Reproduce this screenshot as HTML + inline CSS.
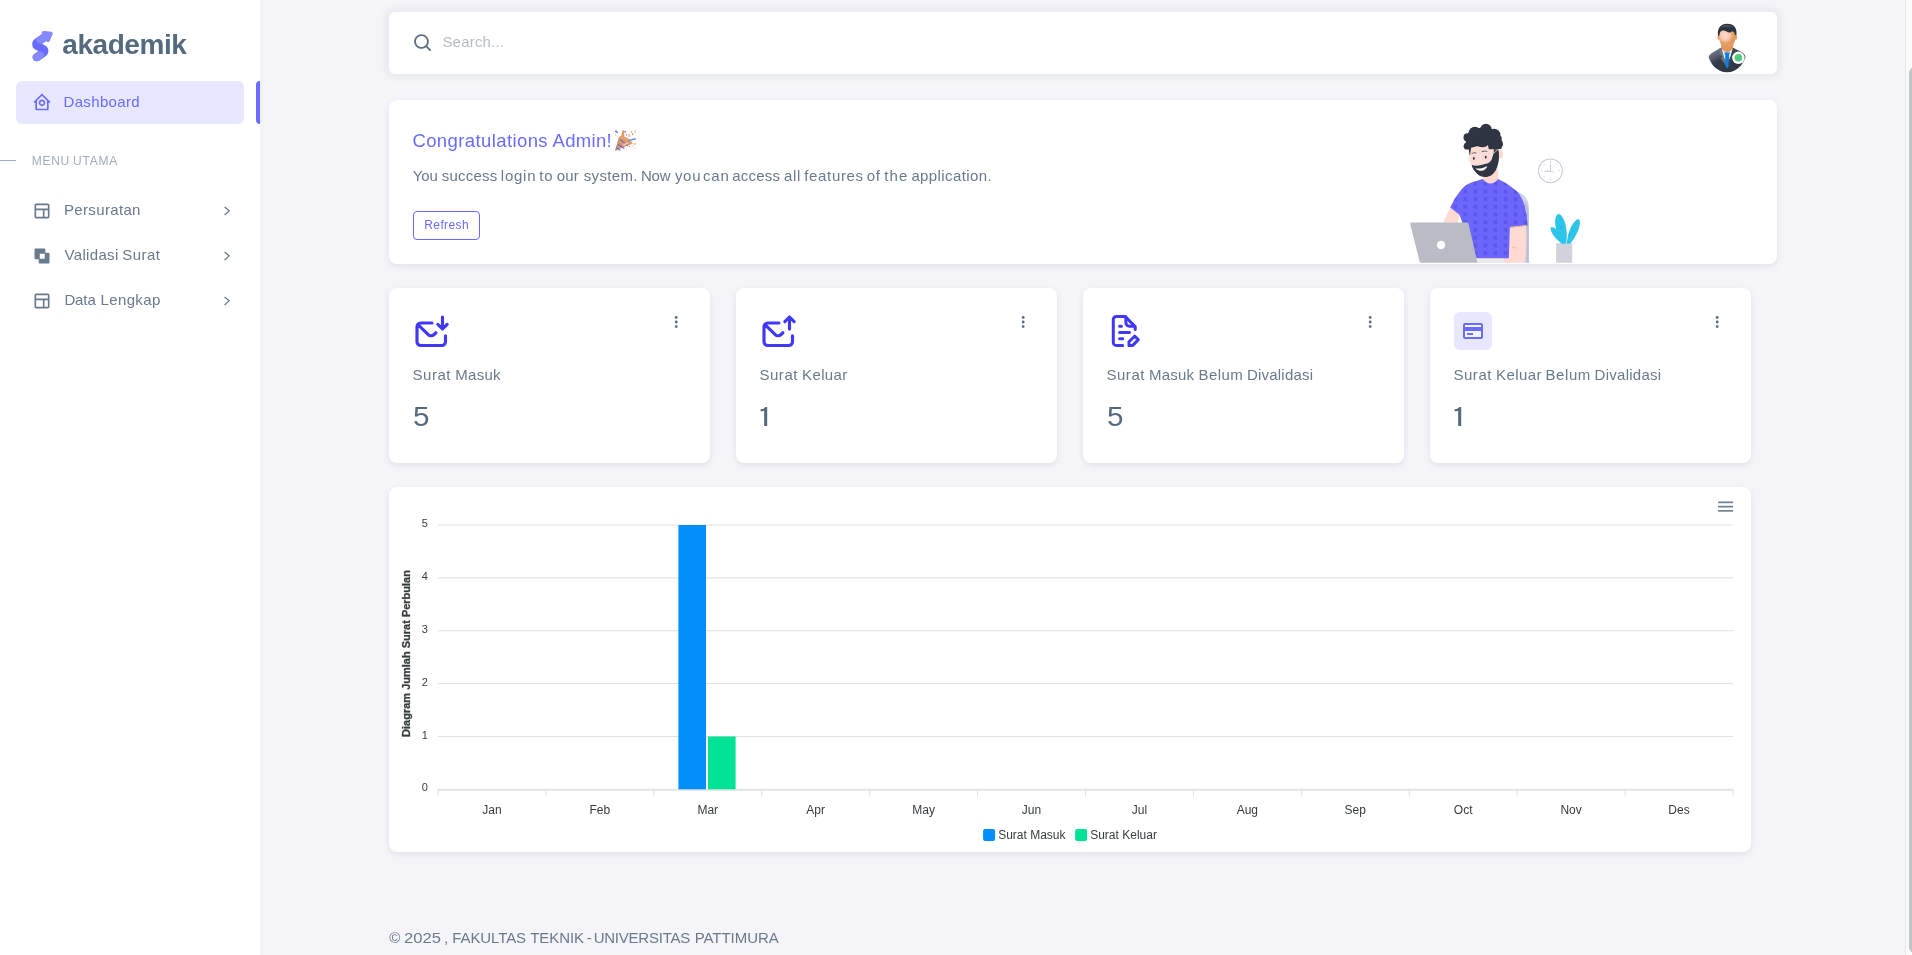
<!DOCTYPE html>
<html lang="en">
<head>
<meta charset="utf-8">
<title>Dashboard</title>
<style>
*{box-sizing:border-box;margin:0;padding:0}
html,body{width:1912px;height:955px;overflow:hidden}
body{background:#f5f5f9;font-family:"Liberation Sans",sans-serif;color:#697a8d;position:relative}
.abs{position:absolute}
.t{position:absolute;white-space:nowrap;line-height:1}
#sidebar{left:0;top:0;width:260px;height:955px;background:#fff;box-shadow:0 2px 6px 0 rgba(161,172,184,.12)}
.card{position:absolute;background:#fff;border-radius:8px;box-shadow:0 2px 6px 0 rgba(67,89,113,.12)}
#navbar{left:389px;top:12px;width:1388px;height:62px;background:rgba(255,255,255,.95);border-radius:6px;box-shadow:0 0 6px 4px rgba(161,172,184,.15)}
.mi{color:#697a8d;font-size:15px}
svg{position:absolute;overflow:visible}
</style>
</head>
<body>
<div id="root" style="will-change:transform;position:absolute;left:0;top:0;width:1912px;height:955px">

<!-- ============ SIDEBAR ============ -->
<div id="sidebar" class="abs"></div>

<!-- brand -->
<div class="t" id="brand" style="left:62.3px;top:30.5px;font-size:28px;font-weight:700;color:#566a7f;letter-spacing:-0.45px">akademik</div>


<!-- active item -->
<div class="abs" style="left:16px;top:81px;width:228px;height:43px;background:#e7e7ff;border-radius:6px"></div>
<div class="abs" style="left:256px;top:81px;width:4px;height:43px;background:#696cff;border-radius:6px 0 0 6px"></div>
<div class="t mi" id="m-dash" style="left:63.5px;top:94.3px;color:#696cff;letter-spacing:.35px">Dashboard</div>


<!-- logo -->
<svg id="logo" style="left:31.8px;top:24.8px" width="22.2" height="37.3" viewBox="0 0 25 42">
  <defs>
    <path d="M13.7918663,0.358365126 L3.39788168,7.44174259 C0.566865006,9.69408886 -0.379795268,12.4788597 0.557900856,15.7960551 C0.68998853,16.2305145 1.09562888,17.7872135 3.12357076,19.2293357 C3.8146334,19.7207684 5.32369333,20.3834223 7.65075054,21.2172976 L7.59773219,21.2525164 L2.63468769,24.5493413 C0.445452254,26.3002124 0.0884951797,28.5083815 1.56381646,31.1738486 C2.83770406,32.8170431 5.20850219,33.2640127 7.09180128,32.5391577 C8.347334,32.0559211 11.4559176,30.0011079 16.4175519,26.3747182 C18.0338572,24.4997857 18.6973423,22.4544883 18.4080071,20.2388261 C17.963753,17.5346866 16.1776345,15.5799961 13.0496516,14.3747546 L10.9194936,13.4715819 L18.6192054,7.984237 L13.7918663,0.358365126 Z" id="lp1"/>
    <path d="M5.47320593,6.00457225 C4.05321814,8.216144 4.36334763,10.0722806 6.40359441,11.5729822 C8.61520715,12.571656 10.0999176,13.2171421 10.8577257,13.5094407 L15.5088241,14.433041 L18.6192054,7.984237 C15.5364148,3.11535317 13.9273018,0.573395879 13.7918663,0.358365126 C13.5790555,0.511491653 10.8061687,2.3935607 5.47320593,6.00457225 Z" id="lp3"/>
    <path d="M7.50063644,21.2294429 L12.3234468,23.3159332 C14.1688022,24.7579751 14.397098,26.4880487 13.008334,28.506154 C11.6195701,30.5242593 10.3099883,31.790241 9.07958868,32.3040991 C5.78142938,33.4346997 4.13234973,34 4.13234973,34 C4.13234973,34 2.75489982,33.0538207 2.37032616e-14,31.1614621 C-0.55822714,27.8186216 -0.55822714,26.0572515 -4.05231404e-15,25.8773518 C0.83734071,25.6075023 2.77988457,22.8248993 3.3049379,22.52991 C3.65497346,22.3332504 5.05353963,21.8997614 7.50063644,21.2294429 Z" id="lp4"/>
    <path d="M20.6,7.13333333 L25.6,13.8 C26.2627417,14.6836556 26.0836556,15.9372583 25.2,16.6 C24.8538077,16.8596443 24.4327404,17 24,17 L14,17 C12.8954305,17 12,16.1045695 12,15 C12,14.5672596 12.1403557,14.1461923 12.4,13.8 L17.4,7.13333333 C18.0627417,6.24967773 19.3163444,6.07059163 20.2,6.73333333 C20.3516113,6.84704183 20.4862915,6.981722 20.6,7.13333333 Z" id="lp5"/>
    <clipPath id="lclip"><use href="#lp1"/></clipPath>
  </defs>
  <g transform="translate(0,8)">
    <use fill="#696cff" href="#lp1"/>
    <g clip-path="url(#lclip)">
      <use fill="#696cff" href="#lp3"/><use fill="#fff" fill-opacity=".2" href="#lp3"/>
      <use fill="#696cff" href="#lp4"/><use fill="#fff" fill-opacity=".2" href="#lp4"/>
    </g>
  </g>
  <g transform="translate(19,11) rotate(60) translate(-19,-11)">
    <use fill="#696cff" href="#lp5"/><use fill="#fff" fill-opacity=".2" href="#lp5"/>
  </g>
</svg>

<!-- home icon -->
<svg style="left:32px;top:92.3px" width="20" height="20" viewBox="0 0 24 24" fill="#696cff"><path d="M3 13h1v7c0 1.103.897 2 2 2h12c1.103 0 2-.897 2-2v-7h1a1 1 0 0 0 .707-1.707l-9-9a.999.999 0 0 0-1.414 0l-9 9A1 1 0 0 0 3 13zm9-8.586 6 6V15l.001 5H6v-9.586l6-6z"/><path d="M12 17c2.206 0 4-1.794 4-4s-1.794-4-4-4-4 1.794-4 4 1.794 4 4 4zm0-6c1.084 0 2 .916 2 2s-.916 2-2 2-2-.916-2-2 .916-2 2-2z"/></svg>

<!-- layout icons -->
<svg style="left:32px;top:201.2px" width="20" height="20" viewBox="0 0 24 24" fill="#697a8d"><path d="M19 3H5c-1.103 0-2 .897-2 2v14c0 1.103.897 2 2 2h14c1.103 0 2-.897 2-2V5c0-1.103-.897-2-2-2zm0 2 .001 4H5V5h14zM5 11h8v8H5v-8zm10 8v-8h4.001l.001 8H15z"/></svg>
<svg style="left:32px;top:246.15px" width="20" height="20" viewBox="0 0 24 24" fill="#697a8d"><path fill-rule="evenodd" d="M14.5 3h-10C3.67 3 3 3.67 3 4.5v10c0 .83.67 1.500 1.500 1.500H8v3.500c0 .83.67 1.500 1.500 1.500h10c.83 0 1.500-.67 1.500-1.500v-10c0-.83-.67-1.500-1.500-1.500H16V4.500C16 3.670 15.330 3 14.500 3zM9.300 9.300h6v6h-6z"/></svg>
<svg style="left:32px;top:291.2px" width="20" height="20" viewBox="0 0 24 24" fill="#697a8d"><path d="M19 3H5c-1.103 0-2 .897-2 2v14c0 1.103.897 2 2 2h14c1.103 0 2-.897 2-2V5c0-1.103-.897-2-2-2zm0 2 .001 4H5V5h14zM5 11h8v8H5v-8zm10 8v-8h4.001l.001 8H15z"/></svg>

<!-- chevrons -->
<svg style="left:0;top:0" width="260" height="955" fill="none" stroke="#5f7085" stroke-width="1.1">
  <polyline points="224.6,207 229.2,210.8 224.6,215"/>
  <polyline points="224.6,252 229.2,255.8 224.6,260"/>
  <polyline points="224.6,297 229.2,300.8 224.6,305"/>
</svg>

<!-- header -->
<div class="abs" style="left:0;top:160px;width:16px;height:1px;background:#a1acb8"></div>
<div class="t" id="m-head" style="left:32.3px;top:154.7px;font-size:12px;color:#a1acb8;;width:500px;height:12px"><span style="position:absolute;left:-0.44px;top:0;letter-spacing:0.669px">MENU</span><span style="position:absolute;left:40.81px;top:0;letter-spacing:0.749px">UTAMA</span></div>

<div class="t mi" id="m-1" style="left:64px;top:202px;letter-spacing:.34px">Persuratan</div>
<div class="t mi" id="m-2" style="left:65px;top:247.1px;;width:500px;height:15px"><span style="position:absolute;left:-0.52px;top:0;letter-spacing:0.335px">Validasi</span><span style="position:absolute;left:57.28px;top:0;letter-spacing:0.469px">Surat</span></div>
<div class="t mi" id="m-3" style="left:63.9px;top:292px;;width:500px;height:15px"><span style="position:absolute;left:0.50px;top:0;letter-spacing:-0.103px">Data</span><span style="position:absolute;left:36.65px;top:0;letter-spacing:0.357px">Lengkap</span></div>

<!-- ============ NAVBAR ============ -->
<div id="navbar" class="abs"></div>
<div class="t" id="search" style="left:442.4px;top:34.2px;font-size:15px;color:#b4bdc6;letter-spacing:.2px">Search...</div>


<!-- search icon -->
<svg style="left:412px;top:32px" width="22" height="22" viewBox="-0.35 -0.35 24 24" fill="#5d6e83"><path d="M10 18a7.952 7.952 0 0 0 4.897-1.688l4.396 4.396 1.414-1.414-4.396-4.396A7.952 7.952 0 0 0 18 10c0-4.411-3.589-8-8-8s-8 3.589-8 8 3.589 8 8 8zm0-14c3.309 0 6 2.691 6 6s-2.691 6-6 6-6-2.691-6-6 2.691-6 6-6z"/></svg>

<!-- avatar -->
<svg style="left:1690px;top:10px" width="100" height="70" viewBox="0 0 1364 955">
  <defs>
    <clipPath id="faceclip"><path d="M395,300 C395,230 450,215 510,215 C570,215 622,230 622,300 L618,400 C610,470 560,522 508,522 C455,522 408,470 400,400 Z"/></clipPath>
    <clipPath id="avclip"><ellipse cx="505" cy="520" rx="273" ry="330"/></clipPath>
    <radialGradient id="facehl" cx="0.5" cy="0.5" r="0.5"><stop offset="0" stop-color="#fddcd0"/><stop offset=".55" stop-color="#f9cbb8" stop-opacity=".9"/><stop offset="1" stop-color="#e9a873" stop-opacity="0"/></radialGradient>
    <linearGradient id="suit" x1="0" y1="0" x2="0.7" y2="1"><stop offset="0" stop-color="#7c8590"/><stop offset=".28" stop-color="#59626f"/><stop offset=".45" stop-color="#353c49"/><stop offset="1" stop-color="#303744"/></linearGradient>
  </defs>
  <g clip-path="url(#avclip)">
    <path d="M240,700 C245,610 300,585 345,560 C370,545 390,532 410,518 L600,518 C625,535 650,550 690,565 C740,590 765,620 770,700 L770,900 L240,900 Z" fill="url(#suit)"/>
    <path d="M425,530 L585,530 L560,640 L505,720 L450,640 Z" fill="#e6eaf0"/>
    <path d="M425,440 L590,440 L588,528 L505,585 L425,528 Z" fill="#e0955a"/>
    <path d="M466,579 L546,579 L532,619 L539,743 L507,797 L477,743 L481,619 Z" fill="#0d7fe8"/>
    <path d="M410,518 L430,525 L498,760 L420,665 L440,632 L392,600 Z" fill="#6a7380"/>
    <path d="M600,518 L585,525 L514,760 L592,665 L572,632 L620,600 Z" fill="#3b4350"/>
  </g>
  <ellipse cx="392" cy="375" rx="16" ry="30" fill="#e49c62"/>
  <ellipse cx="626" cy="375" rx="16" ry="30" fill="#e49c62"/>
  <path d="M395,300 C395,230 450,215 510,215 C570,215 622,230 622,300 L618,400 C610,470 560,522 508,522 C455,522 408,470 400,400 Z" fill="#e39b5e"/>
  <ellipse cx="480" cy="345" rx="125" ry="125" fill="url(#facehl)" clip-path="url(#faceclip)"/>
  <path d="M383,355 C365,250 420,188 508,188 C600,188 650,250 632,355 L612,335 C608,300 590,285 560,300 C545,310 520,310 500,295 C470,272 430,275 412,300 C405,315 402,335 400,350 Z" fill="#2c333e"/>
  <path d="M420,235 C465,200 545,200 595,240 C545,222 480,222 420,235Z" fill="#566171"/>
  <circle cx="660" cy="652" r="85" fill="#fff"/>
  <circle cx="660" cy="652" r="52" fill="#4fce80"/>
</svg>

<!-- ============ WELCOME CARD ============ -->
<div class="card" style="left:389px;top:100px;width:1388px;height:164px"></div>
<div class="t" id="w-title" style="left:412.3px;top:131.5px;font-size:18.5px;color:#696cff;;width:500px;height:18.5px"><span style="position:absolute;left:0.11px;top:0;letter-spacing:0.400px">Congratulations</span><span style="position:absolute;left:140.27px;top:0;letter-spacing:0.296px">Admin!</span></div>
<div class="t" id="w-par" style="left:413px;top:168px;font-size:15px;width:600px;height:15px"><span style="position:absolute;left:-0.27px;top:0;letter-spacing:-0.092px">You</span><span style="position:absolute;left:28.72px;top:0;letter-spacing:0.220px">success</span><span style="position:absolute;left:87.85px;top:0;letter-spacing:0.745px">login</span><span style="position:absolute;left:126.35px;top:0;letter-spacing:0.698px">to</span><span style="position:absolute;left:143.72px;top:0;letter-spacing:0.130px">our</span><span style="position:absolute;left:170.72px;top:0;letter-spacing:0.339px">system.</span><span style="position:absolute;left:227.95px;top:0;letter-spacing:-0.156px">Now</span><span style="position:absolute;left:261.92px;top:0;letter-spacing:0.691px">you</span><span style="position:absolute;left:290.11px;top:0;letter-spacing:0.720px">can</span><span style="position:absolute;left:319.19px;top:0;letter-spacing:0.221px">access</span><span style="position:absolute;left:370.89px;top:0;letter-spacing:0.741px">all</span><span style="position:absolute;left:391.26px;top:0;letter-spacing:0.655px">features</span><span style="position:absolute;left:453.82px;top:0;letter-spacing:0.614px">of</span><span style="position:absolute;left:471.35px;top:0;letter-spacing:1.028px">the</span><span style="position:absolute;left:498.39px;top:0;letter-spacing:0.403px">application.</span></div>
<div class="abs" style="left:413px;top:211px;width:67px;height:29px;border:1px solid #696cff;border-radius:4px"></div>
<div class="t" id="w-btn" style="left:424.3px;top:218.8px;font-size:12px;color:#696cff;letter-spacing:.38px">Refresh</div>


<!-- emoji party popper -->
<svg style="left:560px;top:115px" width="100" height="50" viewBox="0 0 1910 955">
  <path d="M1050,682 L1128,425 C1200,400 1345,470 1385,550 Z" fill="#de9a5e"/>
  <path d="M1050,682 L1128,425 L1150,440 L1078,690 Z" fill="#8d99a8" opacity=".6"/>
  <g stroke="#5a5cf0" stroke-width="20" fill="none">
    <path d="M1150,470 L1300,585"/><path d="M1105,560 L1230,640"/><path d="M1078,628 L1150,672"/>
  </g>
  <path d="M1128,425 C1150,380 1240,395 1310,455 C1370,505 1400,545 1385,560 C1330,520 1200,440 1128,425Z" fill="#e6a46a"/>
  <path d="M1165,420 L1195,285 L1232,300 L1225,430Z" fill="#e09a5b"/>
  <path d="M1290,478 L1445,440 L1448,468 L1305,502Z" fill="#6a8df5"/>
  <path d="M1200,560 L1290,520 L1310,545 L1215,590Z" fill="#f3c3aa"/>
  <g fill="#5a5cf0"><rect x="1050" y="312" width="60" height="22" transform="rotate(32 1080 323)"/><circle cx="1250" cy="320" r="14"/><circle cx="1268" cy="380" r="12"/><circle cx="1325" cy="600" r="10"/></g>
  <g fill="#f2b9a0"><rect x="1305" y="365" width="30" height="62"/><circle cx="1430" cy="552" r="20"/><circle cx="1395" cy="598" r="14"/><circle cx="1410" cy="640" r="12"/><circle cx="1437" cy="330" r="16"/></g>
  <g fill="#e39a5d"><circle cx="1365" cy="320" r="14"/><rect x="1375" y="345" width="22" height="40"/></g>
  <g fill="#aab4c0"><circle cx="1075" cy="298" r="12"/><circle cx="1432" cy="298" r="12"/><circle cx="1065" cy="380" r="10"/></g>
</svg>

<!-- illustration -->
<svg style="left:1400px;top:110px" width="200" height="160" viewBox="0 0 1194 955">
  <defs>
    <pattern id="xx" width="60" height="46" patternUnits="userSpaceOnUse" patternTransform="translate(12,8)">
      <path d="M8,8 L28,28 M28,8 L8,28" stroke="#5a55e8" stroke-width="9" fill="none"/>
    </pattern>
    <pattern id="hatch" width="10" height="10" patternUnits="userSpaceOnUse" patternTransform="rotate(45)"><rect width="10" height="10" fill="#d7d8e0"/><rect width="4" height="10" fill="#c8cad3"/></pattern>
    <clipPath id="shirtclip"><path id="shirtp" d="M495,412 C450,425 405,438 385,455 C345,495 318,545 300,582 L355,625 L372,672 L455,885 L650,885 L656,702 L762,690 C757,600 735,525 705,492 C675,462 625,432 585,412 C560,448 520,448 495,412 Z"/></clipPath>
  </defs>
  <!-- chair -->
  <path d="M700,490 C745,500 770,540 770,590 L770,912 L725,912 L725,520 Z" fill="#cfd1e6"/>
  <path d="M740,540 C760,560 768,590 768,620 L768,912 L755,912 L755,600 Z" fill="#babdd6"/>
  <!-- neck -->
  <path d="M495,370 L585,350 L588,415 C560,452 520,452 495,415 Z" fill="#ffd7d0"/>
  <!-- left arm -->
  <path d="M300,582 L357,625 L345,672 L258,672 Z" fill="#ffdbd4"/>
  <!-- right arm -->
  <path d="M656,700 L752,692 C757,770 755,850 742,912 L470,912 L465,880 L650,872 Z" fill="#ffdad3"/>
  <path d="M668,815 C680,825 690,825 695,822" stroke="#f5a98f" stroke-width="5" fill="none"/>
  <!-- shirt -->
  <use href="#shirtp" fill="#6c66fb"/>
  <rect x="290" y="400" width="480" height="500" fill="url(#xx)" clip-path="url(#shirtclip)"/>
  <path d="M656,700 L752,690" stroke="#f0b49e" stroke-width="6"/>
  <!-- head -->
  <g transform="translate(298.5,29.85) scale(0.4377)">
    <ellipse cx="690" cy="535" rx="32" ry="56" fill="#ffd8d0"/>
    <path d="M262,440 L520,390 L650,440 L650,650 L300,700 L262,610 Z" fill="#ffdbd4"/>
    <!-- beard -->
    <path d="M295,680 C330,702 420,692 520,652 C565,630 592,560 600,470 L662,470 C684,600 655,760 565,822 C500,862 420,852 370,802 C330,762 300,722 295,680Z" fill="#2f3542"/>
    <path d="M345,728 C400,737 460,722 506,694 C492,752 420,792 345,728Z" fill="#fff"/>
    <!-- hair -->
    <g fill="#2f3542">
      <path d="M195,450 L285,448 L512,392 L530,468 L700,462 L705,300 L500,140 L250,240 Z"/>
      <circle cx="490" cy="200" r="80"/><circle cx="340" cy="245" r="85"/><circle cx="600" cy="275" r="88"/>
      <circle cx="240" cy="305" r="56"/><circle cx="232" cy="425" r="46"/><circle cx="655" cy="395" r="68"/>
      <circle cx="440" cy="320" r="120"/><circle cx="610" cy="420" r="50"/>
      <path d="M250,440 L290,440 L270,560 Z"/>
    </g>
    <!-- brows, eyes -->
    <path d="M298,527 Q325,505 354,517 M438,499 Q470,484 504,496" stroke="#2f3542" stroke-width="11" fill="none" stroke-linecap="round"/>
    <ellipse cx="325" cy="593" rx="12" ry="20" fill="#2f3542"/><ellipse cx="487" cy="576" rx="12" ry="20" fill="#2f3542"/>
    <!-- glasses -->
    <g fill="none" stroke="#eceaf1" stroke-width="10"><circle cx="322" cy="602" r="70"/><circle cx="490" cy="582" r="76"/><path d="M560,545 L650,478"/></g>
  </g>
  <!-- laptop -->
  <rect x="455" y="888" width="165" height="24" fill="#e9eaee"/>
  <path d="M72,672 L397,672 C404,672 408,676 410,683 L460,900 C462,908 458,912 450,912 L128,912 C122,912 118,908 116,902 L62,684 C60,676 64,672 72,672Z" fill="#b9bcc4"/>
  <circle cx="245" cy="806" r="25" fill="#fff"/>
  <!-- clock -->
  <circle cx="898" cy="363" r="71" fill="#fff" stroke="#c3c6dd" stroke-width="6"/>
  <g stroke="#c3c6dc" stroke-width="4"><path d="M898,305V318M898,408V421M840,363H853M943,363H956M857,322l8,8M939,322l-8,8M857,404l8,-8M939,404l-8,-8"/></g>
  <path d="M898,325V365H862" stroke="#b7bace" stroke-width="5" fill="none"/>
  <path d="M898,365L918,372" stroke="#f5a29a" stroke-width="4"/>
  <!-- plant -->
  <rect x="932" y="795" width="96" height="117" fill="url(#hatch)"/>
  <g fill="#2cc4e8">
    <path d="M968,798 C925,730 912,640 945,620 C980,628 1005,710 992,798 Z"/>
    <path d="M995,798 C1003,720 1035,655 1066,650 C1088,665 1062,745 1015,798 Z"/>
    <path d="M965,798 C930,772 893,728 900,702 C925,690 958,732 972,795 Z"/>
  </g>
  <circle cx="962" cy="700" r="3" fill="#1878c8"/><circle cx="1010" cy="742" r="3" fill="#1878c8"/>
</svg>

<!-- ============ STAT CARDS ============ -->
<div class="card" style="left:389px;top:288px;width:321px;height:175px"></div>
<div class="card" style="left:736px;top:288px;width:321px;height:175px"></div>
<div class="card" style="left:1083px;top:288px;width:321px;height:175px"></div>
<div class="card" style="left:1430px;top:288px;width:321px;height:175px"></div>

<div class="t" id="s-1" style="left:413px;top:367.2px;font-size:15px;;width:500px;height:15px"><span style="position:absolute;left:-0.42px;top:0;letter-spacing:0.519px">Surat</span><span style="position:absolute;left:42.25px;top:0;letter-spacing:0.269px">Masuk</span></div>
<div class="t" id="s-2" style="left:760px;top:367.2px;font-size:15px;;width:500px;height:15px"><span style="position:absolute;left:-0.52px;top:0;letter-spacing:0.519px">Surat</span><span style="position:absolute;left:42.05px;top:0;letter-spacing:0.382px">Keluar</span></div>
<div class="t" id="s-3" style="left:1107px;top:367.2px;font-size:15px;;width:500px;height:15px"><span style="position:absolute;left:-0.52px;top:0;letter-spacing:0.519px">Surat</span><span style="position:absolute;left:42.05px;top:0;letter-spacing:0.194px">Masuk</span><span style="position:absolute;left:91.55px;top:0;letter-spacing:0.420px">Belum</span><span style="position:absolute;left:139.95px;top:0;letter-spacing:0.214px">Divalidasi</span></div>
<div class="t" id="s-4" style="left:1454px;top:367.2px;font-size:15px;;width:500px;height:15px"><span style="position:absolute;left:-0.52px;top:0;letter-spacing:0.519px">Surat</span><span style="position:absolute;left:42.05px;top:0;letter-spacing:0.402px">Keluar</span><span style="position:absolute;left:91.55px;top:0;letter-spacing:0.570px">Belum</span><span style="position:absolute;left:140.55px;top:0;letter-spacing:0.269px">Divalidasi</span></div>

<div class="t" id="n-1" style="left:412.8px;top:403.8px;font-size:27px;color:#566a7f;transform:scaleX(1.1);transform-origin:0 0">5</div>
<svg style="left:750px;top:395px" width="60" height="45" viewBox="0 0 1273 955"><path fill="#566a7f" d="M365,255 L365,660 L300,660 L300,335 C275,343 250,346 225,346 L225,305 C270,300 305,290 322,255 Z"/></svg>
<div class="t" id="n-3" style="left:1106.8px;top:403.8px;font-size:27px;color:#566a7f;transform:scaleX(1.1);transform-origin:0 0">5</div>
<svg style="left:1444px;top:395px" width="60" height="45" viewBox="0 0 1273 955"><path fill="#566a7f" d="M365,255 L365,660 L300,660 L300,335 C275,343 250,346 225,346 L225,305 C270,300 305,290 322,255 Z"/></svg>


<!-- stat icons -->
<svg style="left:413.8px;top:313.7px" width="36" height="36" viewBox="0 0 24 24" fill="none" stroke="#4038f5" stroke-width="2.1" stroke-linecap="round" stroke-linejoin="round"><path d="M12 6H4.500a2.500 2.500 0 0 0-2.500 2.500v10a2.500 2.500 0 0 0 2.500 2.500h14a2.500 2.500 0 0 0 2.500-2.500v-4M2.800 7.200l6.700 6.500a2.700 2.700 0 0 0 3.700.100l1.400-1.300"/><path d="M19 2v8m-3.100-3.100 3.100 3.100 3.100-3.100"/></svg>
<svg style="left:760.8px;top:313.7px" width="36" height="36" viewBox="0 0 24 24" fill="none" stroke="#4038f5" stroke-width="2.1" stroke-linecap="round" stroke-linejoin="round"><path d="M12 6H4.500a2.500 2.500 0 0 0-2.500 2.500v10a2.500 2.500 0 0 0 2.500 2.500h14a2.500 2.500 0 0 0 2.500-2.500v-4M2.800 7.200l6.700 6.500a2.700 2.700 0 0 0 3.700.100l1.400-1.300"/><path d="M19 10V2m-3.100 3.100L19 2l3.100 3.100"/></svg>
<svg style="left:1099px;top:305px" width="60" height="50" viewBox="0 0 60 50" fill="none" stroke="#4038f5" stroke-width="3" stroke-linecap="round" stroke-linejoin="round">
  <path d="M23.700 40.400h-6.400a3 3 0 0 1-3-3V14.400a3 3 0 0 1 3-3h8.700l10.200 10.200v2.900"/>
  <path d="M26.900 11.800v5.900a3.500 3.500 0 0 0 3.500 3.500h5.200"/>
  <path d="M20.600 21.200h1.800M20.600 27.500h9.900M20.600 33.800h3.100"/>
  <path d="M35.600 31.200l3.700 3.400-5.500 5.800h-3.800v-3.600z"/>
</svg>
<div class="abs" style="left:1454px;top:312px;width:38px;height:38px;background:#e7e7ff;border-radius:6px"></div>
<svg style="left:1461px;top:319px" width="24" height="24" viewBox="0 0 24 24"><path d="M4 6h16v12H4z" fill="#f4f4ff"/><path fill="#696cff" d="M20 4H4c-1.103 0-2 .897-2 2v12c0 1.103.897 2 2 2h16c1.103 0 2-.897 2-2V6c0-1.103-.897-2-2-2zM4 6h16v2H4V6zm0 12v-6h16.001l.001 6H4z"/><path fill="#696cff" d="M6 14h6v2H6z"/></svg>

<!-- dots -->
<svg style="left:0;top:0" width="1912" height="400" fill="#566a7f">
  <g id="dots"><circle cx="676.200" cy="317.400" r="1.400"/><circle cx="676.200" cy="322" r="1.400"/><circle cx="676.200" cy="326.600" r="1.400"/></g>
  <use href="#dots" x="347"/><use href="#dots" x="694"/><use href="#dots" x="1041"/>
</svg>

<!-- ============ CHART CARD ============ -->
<div class="card" style="left:389px;top:487px;width:1362px;height:365px"></div>


<svg id="chart" style="left:0;top:0" width="1912" height="955" font-family="'Liberation Sans',sans-serif">
  <g stroke="#e0e0e0" stroke-width="1"><line x1="438" x2="1733" y1="525.00" y2="525.00"/><line x1="438" x2="1733" y1="577.86" y2="577.86"/><line x1="438" x2="1733" y1="630.72" y2="630.72"/><line x1="438" x2="1733" y1="683.58" y2="683.58"/><line x1="438" x2="1733" y1="736.44" y2="736.44"/><line x1="438" x2="1733" y1="789.30" y2="789.30"/></g>
  <g stroke="#e0e0e0" stroke-width="1"><line x1="438" x2="1733" y1="790.200" y2="790.200"/><line x1="438.00" x2="438.00" y1="789.3" y2="796.3"/><line x1="545.92" x2="545.92" y1="789.3" y2="796.3"/><line x1="653.83" x2="653.83" y1="789.3" y2="796.3"/><line x1="761.75" x2="761.75" y1="789.3" y2="796.3"/><line x1="869.67" x2="869.67" y1="789.3" y2="796.3"/><line x1="977.58" x2="977.58" y1="789.3" y2="796.3"/><line x1="1085.50" x2="1085.50" y1="789.3" y2="796.3"/><line x1="1193.42" x2="1193.42" y1="789.3" y2="796.3"/><line x1="1301.33" x2="1301.33" y1="789.3" y2="796.3"/><line x1="1409.25" x2="1409.25" y1="789.3" y2="796.3"/><line x1="1517.17" x2="1517.17" y1="789.3" y2="796.3"/><line x1="1625.08" x2="1625.08" y1="789.3" y2="796.3"/><line x1="1733.00" x2="1733.00" y1="789.3" y2="796.3"/></g>
  <rect x="678.400" y="525" width="27.600" height="264.300" fill="#008ffb"/>
  <rect x="708" y="736.500" width="27.600" height="52.800" fill="#00e396"/>
  <g font-size="11" fill="#373d3f"><text x="427.800" y="527.10" text-anchor="end">5</text><text x="427.800" y="579.96" text-anchor="end">4</text><text x="427.800" y="632.82" text-anchor="end">3</text><text x="427.800" y="685.68" text-anchor="end">2</text><text x="427.800" y="738.54" text-anchor="end">1</text><text x="427.800" y="791.40" text-anchor="end">0</text></g>
  <g font-size="12" fill="#373d3f"><text x="491.96" y="814.100" text-anchor="middle">Jan</text><text x="599.88" y="814.100" text-anchor="middle">Feb</text><text x="707.79" y="814.100" text-anchor="middle">Mar</text><text x="815.71" y="814.100" text-anchor="middle">Apr</text><text x="923.62" y="814.100" text-anchor="middle">May</text><text x="1031.54" y="814.100" text-anchor="middle">Jun</text><text x="1139.46" y="814.100" text-anchor="middle">Jul</text><text x="1247.38" y="814.100" text-anchor="middle">Aug</text><text x="1355.29" y="814.100" text-anchor="middle">Sep</text><text x="1463.21" y="814.100" text-anchor="middle">Oct</text><text x="1571.12" y="814.100" text-anchor="middle">Nov</text><text x="1679.04" y="814.100" text-anchor="middle">Des</text></g>
  <text font-size="11" font-weight="700" fill="#373d3f" stroke="#373d3f" stroke-width=".3" text-anchor="middle" transform="translate(410,653.500) rotate(-90)">Diagram Jumlah Surat Perbulan</text>
  <rect x="983.100" y="828.900" width="12" height="12" rx="2" fill="#008ffb"/>
  <rect x="1075.100" y="828.900" width="12" height="12" rx="2" fill="#00e396"/>
  <g font-size="12" fill="#373d3f"><text x="998.200" y="838.800">Surat Masuk</text><text x="1090.200" y="838.800">Surat Keluar</text></g>
  <g fill="#6e8192"><rect x="1718.100" y="501.500" width="15" height="1.700"/><rect x="1718.100" y="505.800" width="15" height="1.700"/><rect x="1718.100" y="510" width="15" height="1.700"/></g>
</svg>

<!-- ============ FOOTER ============ -->
<div class="t" id="footer" style="left:389px;top:930.4px;font-size:15px;;width:500px;height:15px"><span style="position:absolute;left:0.15px;top:0;letter-spacing:0.000px">©</span><span style="position:absolute;left:15.18px;top:0;letter-spacing:0;transform:scaleX(1.105);transform-origin:0 0">2025</span><span style="position:absolute;left:55.11px;top:0;letter-spacing:0.000px">,</span><span style="position:absolute;left:63.25px;top:0;letter-spacing:-0.095px">FAKULTAS</span><span style="position:absolute;left:141.19px;top:0;letter-spacing:-0.048px">TEKNIK</span><span style="position:absolute;left:197.67px;top:0;letter-spacing:0.000px">-</span><span style="position:absolute;left:204.65px;top:0;letter-spacing:-0.231px">UNIVERSITAS</span><span style="position:absolute;left:305.65px;top:0;letter-spacing:-0.039px">PATTIMURA</span></div>

<!-- ============ SCROLLBAR ============ -->
<div class="abs" style="left:1905px;top:0;width:7px;height:955px;background:#fafafa;border-left:1px solid #e8e8e8"></div>
<div class="abs" style="left:1909px;top:67px;width:12px;height:886px;background:#c1c5c7;border-radius:6px"></div>

</div>
</body>
</html>
